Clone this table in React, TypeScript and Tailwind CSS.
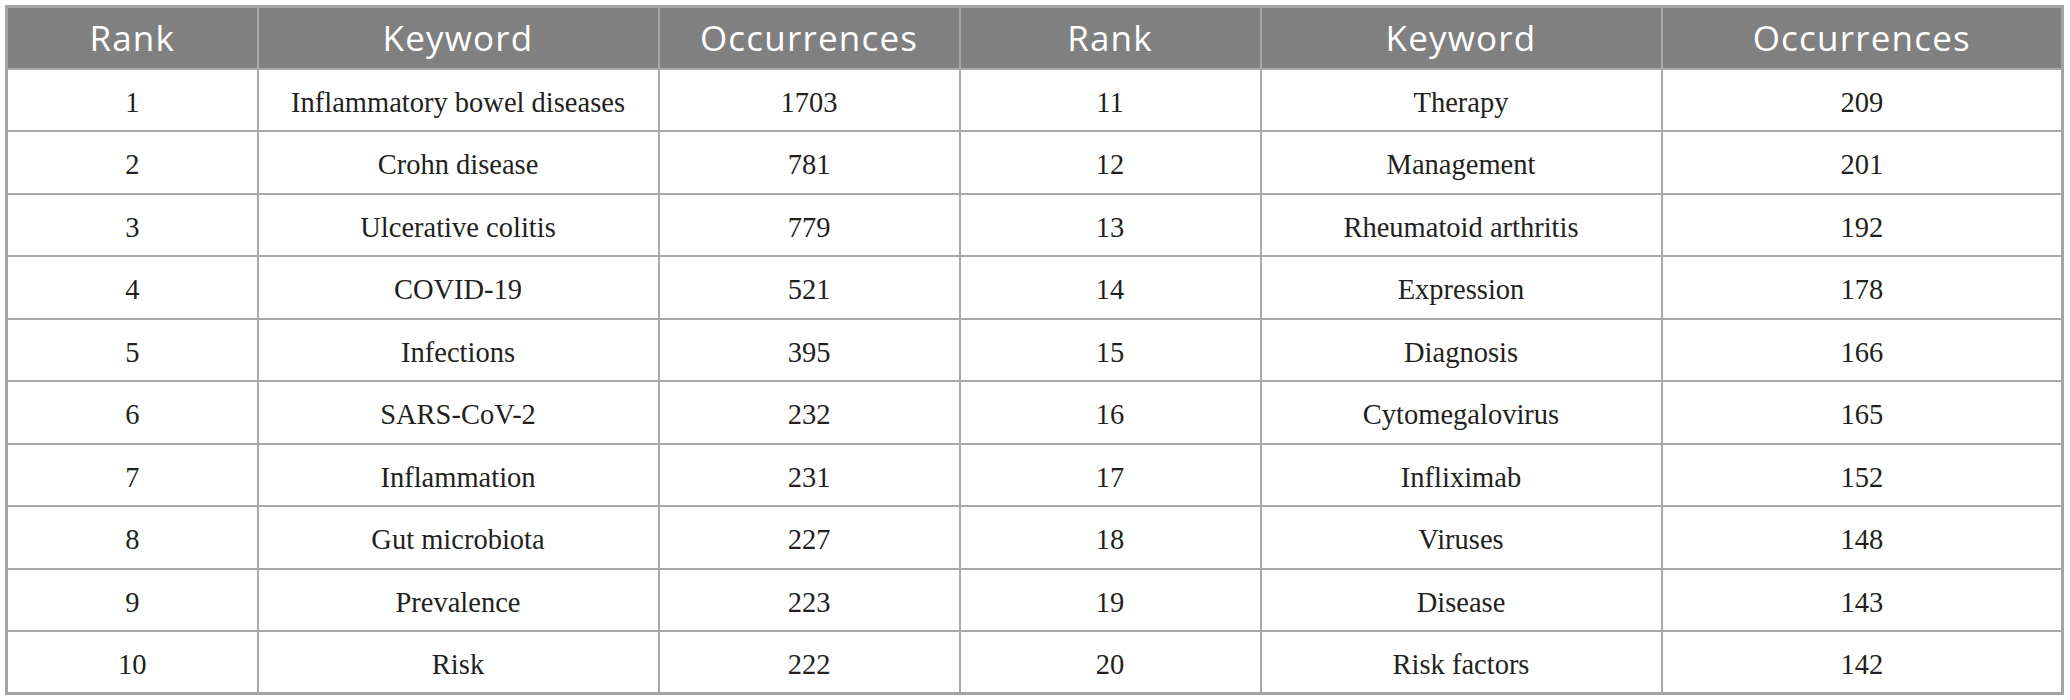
import React from "react";

const rows: [number, string, number, number, string, number][] = [
  [1, "Inflammatory bowel diseases", 1703, 11, "Therapy", 209],
  [2, "Crohn disease", 781, 12, "Management", 201],
  [3, "Ulcerative colitis", 779, 13, "Rheumatoid arthritis", 192],
  [4, "COVID-19", 521, 14, "Expression", 178],
  [5, "Infections", 395, 15, "Diagnosis", 166],
  [6, "SARS-CoV-2", 232, 16, "Cytomegalovirus", 165],
  [7, "Inflammation", 231, 17, "Infliximab", 152],
  [8, "Gut microbiota", 227, 18, "Viruses", 148],
  [9, "Prevalence", 223, 19, "Disease", 143],
  [10, "Risk", 222, 20, "Risk factors", 142],
];

const headers = ["Rank", "Keyword", "Occurrences", "Rank", "Keyword", "Occurrences"];
const widths = ["w-[251px]", "w-[401px]", "w-[301px]", "w-[301px]", "w-[401px]", "w-[401px]"];

const App = () => {
  return (
    <div className="w-[2070px] h-[700px] bg-white pt-[5px] pl-[5px]">
      <table className="w-[2059px] border-collapse border-[3px] border-[#a3a3a3] table-fixed">
        <colgroup>
          {widths.map((w, i) => (
            <col key={i} className={w} />
          ))}
        </colgroup>
        <thead>
          <tr className="h-[62px] bg-[#808080]">
            {headers.map((h, i) => (
              <th
                key={i}
                className="border-2 border-[#a8a8a8] text-white font-normal text-center text-[35px] tracking-[1.2px] font-['Open_Sans',sans-serif] leading-none"
              >
                {h}
              </th>
            ))}
          </tr>
        </thead>
        <tbody>
          {rows.map((r, i) => (
            <tr key={i} className="h-[62.5px]">
              {r.map((c, j) => (
                <td
                  key={j}
                  className="border-2 border-[#a8a8a8] text-center text-[28.5px] text-[#231f20] font-['Liberation_Serif',serif] leading-none pt-[6px]"
                >
                  {c}
                </td>
              ))}
            </tr>
          ))}
        </tbody>
      </table>
    </div>
  );
};

export default App;
